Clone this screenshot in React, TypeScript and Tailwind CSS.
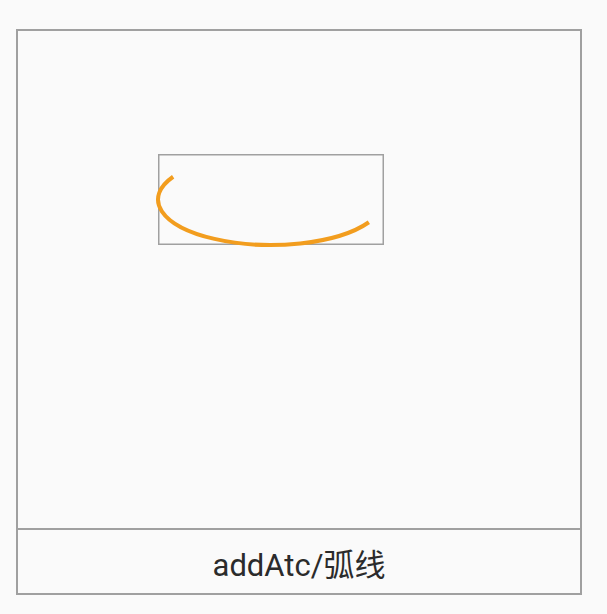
export default function App() {
  return (
    <div className="min-h-[614px] w-[607px] bg-[#fafafa] pl-4 pt-[29px]">
      <div className="flex h-[566px] w-[566px] flex-col border-2 border-[#a0a0a0]">
        {/* canvas */}
        <div className="h-[499px] border-b-2 border-[#a0a0a0]">
          <svg width="562" height="497" viewBox="0 0 562 497">
            <rect x="140.75" y="123.75" width="224.5" height="89.5" fill="none" stroke="#a0a0a0" strokeWidth="1.5" />
            <path
              d="M350.86 191.25 A113 45.5 0 0 1 196.5 207.9 A113 45.5 0 0 1 155.14 145.75"
              fill="none"
              stroke="#f29d1e"
              strokeWidth="4"
            />
          </svg>
        </div>
        {/* caption */}
        <div className="flex flex-1 items-center justify-center pt-[9px]">
          <span className="text-[31px] text-[#2b2b2b] [font-family:Roboto,'Noto_Sans_CJK_SC',sans-serif]">
            addAtc/弧线
          </span>
        </div>
      </div>
    </div>
  );
}
